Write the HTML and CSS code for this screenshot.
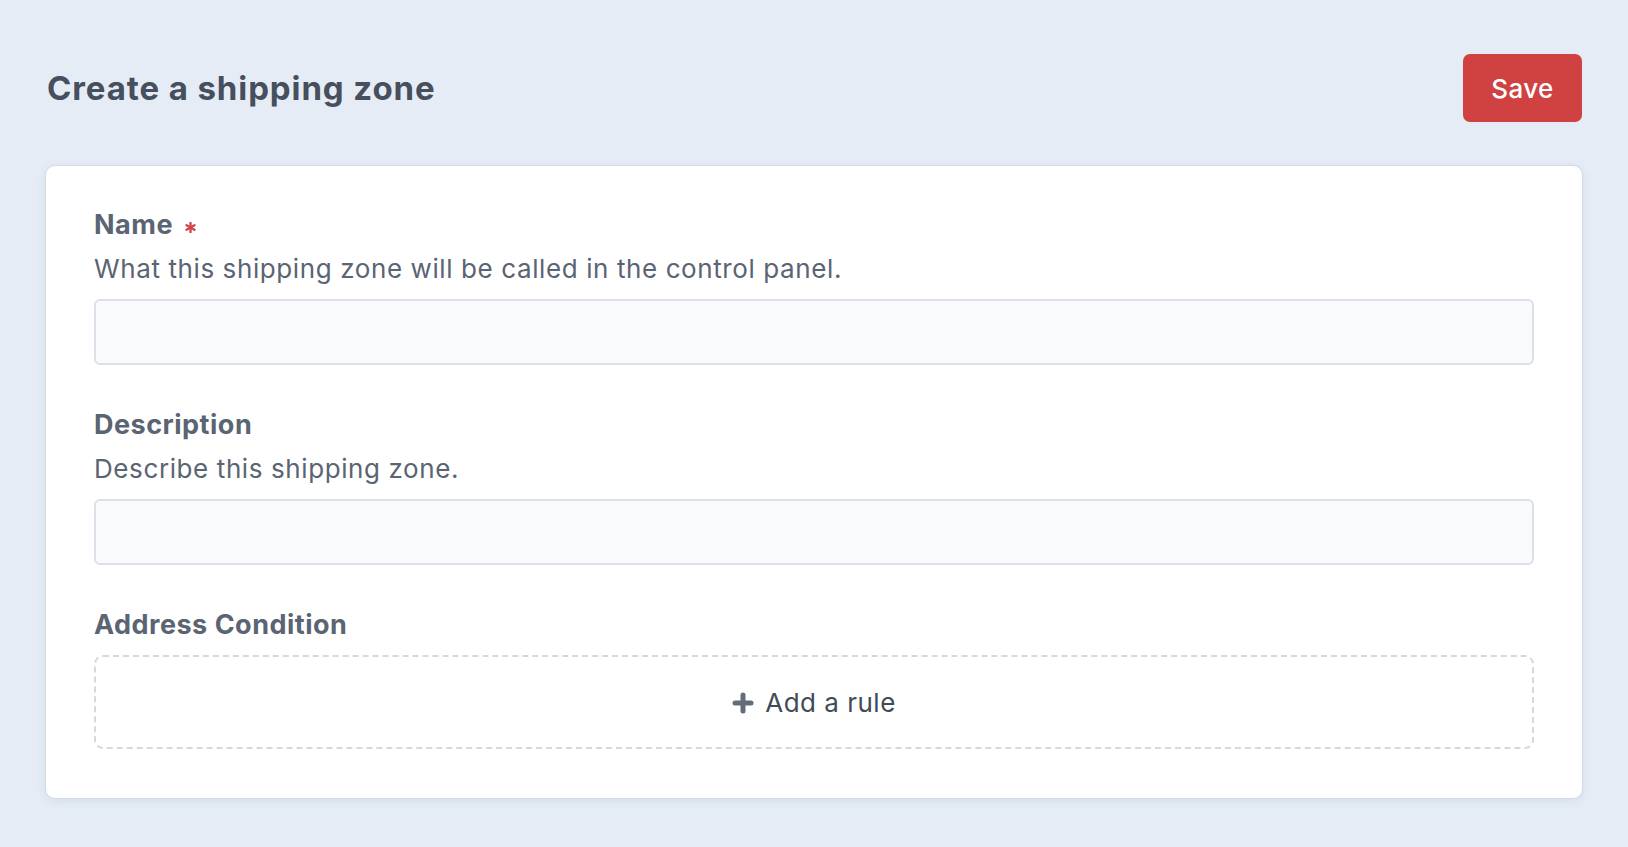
FILE: index.html
```html
<!DOCTYPE html>
<html lang="en">
<head>
<meta charset="utf-8">
<title>Create a shipping zone</title>
<link rel="stylesheet" href="styles.css">
</head>
<body>
<div class="page">
  <header class="page-header">
    <h1 class="page-title">Create a shipping zone</h1>
    <button class="btn-save" type="button">Save</button>
  </header>
  <section class="card">
    <div class="field">
      <label class="field-label">Name <span class="required"><svg width="11" height="11" viewBox="0 0 12 12"><g stroke="#d04848" stroke-width="2.6" stroke-linecap="round"><line x1="6" y1="1" x2="6" y2="11"/><line x1="1.7" y1="3.5" x2="10.3" y2="8.5"/><line x1="1.7" y1="8.5" x2="10.3" y2="3.5"/></g></svg></span></label>
      <p class="field-help">What this shipping zone will be called in the control panel.</p>
      <input class="field-input" type="text">
    </div>
    <div class="field">
      <label class="field-label">Description</label>
      <p class="field-help">Describe this shipping zone.</p>
      <input class="field-input" type="text">
    </div>
    <div class="field">
      <label class="field-label">Address Condition</label>
      <div class="rule-box">
        <span class="rule-add"><svg class="plus" width="22" height="22" viewBox="0 0 22 22"><g stroke="#636c78" stroke-width="5" stroke-linecap="round"><line x1="11" y1="3" x2="11" y2="19"/><line x1="3" y1="11" x2="19" y2="11"/></g></svg>Add a rule</span>
      </div>
    </div>
  </section>
</div>
</body>
</html>
```

FILE: styles.css
```css
* { box-sizing: border-box; }
html, body { margin: 0; padding: 0; }
body {
  background: #e5ecf5;
  font-family: Inter, "Noto Sans", "Liberation Sans", sans-serif;
  color: #5a6472;
}
.page {
  padding: 54px 45px 40px 45px;
}
.page-header {
  display: flex;
  align-items: center;
  justify-content: space-between;
  margin-bottom: 43px;
  height: 68px;
}
.page-title {
  margin: 0 0 0 2px;
  font-size: 33px;
  font-weight: 700;
  color: #454f5d;
  letter-spacing: 0.9px;
}
.btn-save {
  height: 68px;
  width: 119px;
  margin-right: 1px;
  border: 0;
  border-radius: 7px;
  background: #d04141;
  color: #fff;
  font-family: inherit;
  font-size: 26px;
  font-weight: 500;
  letter-spacing: 0.4px;
}
.card {
  background: #fff;
  border: 1px solid #d3dae5;
  border-radius: 10px;
  box-shadow: 0 2px 8px rgba(140, 160, 190, 0.18);
  padding: 41px 48px 49px 48px;
  display: flex;
  flex-direction: column;
  gap: 42px;
}
.field {
  display: flex;
  flex-direction: column;
}
.field-label {
  display: flex;
  align-items: center;
  gap: 12px;
  font-size: 27px;
  line-height: 36px;
  font-weight: 700;
  letter-spacing: 0.5px;
  color: #5a6472;
}
.required { display: inline-flex; margin-top: 4px; }
.field-help {
  margin: 8px 0 0 0;
  font-size: 26px;
  line-height: 36px;
  letter-spacing: 0.6px;
  color: #5a6472;
}
.field-input {
  margin-top: 12px;
  height: 66px;
  width: 100%;
  background: #f9fafc;
  border: 2px solid #dce0e8;
  border-radius: 6px;
}
.rule-box {
  margin-top: 12px;
  height: 94px;
  border: 2px dashed #d6d8dc;
  border-radius: 9px;
  display: flex;
  align-items: center;
  justify-content: center;
}
.rule-add {
  display: inline-flex;
  align-items: center;
  gap: 11px;
  font-size: 26px;
  letter-spacing: 0.5px;
  color: #414b58;
}
.plus { margin-top: 1px; }
```
